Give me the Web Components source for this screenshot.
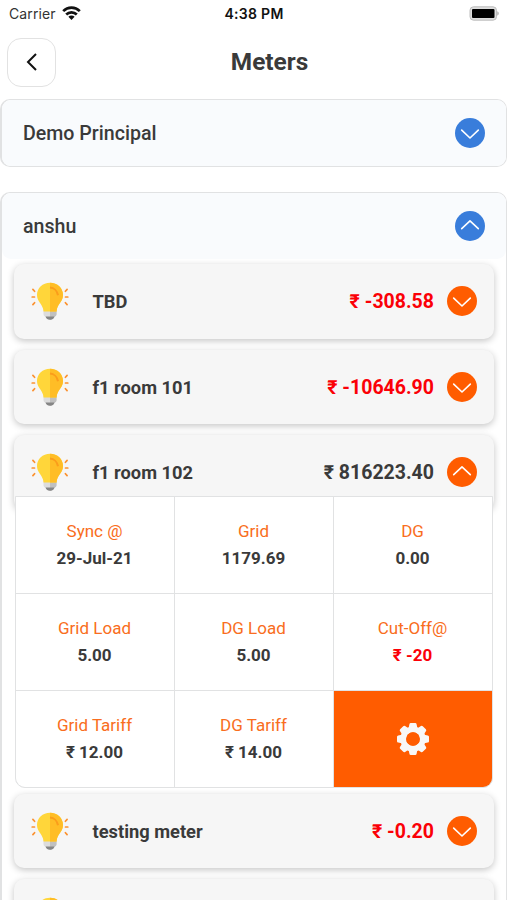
<!DOCTYPE html>
<html lang="en">
<head>
<meta charset="utf-8">
<meta name="viewport" content="width=device-width, initial-scale=1">
<title>Meters</title>
<style>
    :root {
        --accent-color: #ff5c00;
        --primary-color: #397ddb;
        --text-color: #3a3a3a;
        --danger-color: #fb0007;
        --line-color: #e1e2e3;
    }
    body {
        margin: 0;
        background: #fff;
        color: var(--text-color);
        font-family: Roboto, "Noto Sans", sans-serif;
    }
</style>
</head>
<body>
<meters-screen></meters-screen>

<script>
class BaseElement extends HTMLElement {
    constructor() {
        super();
        this.attachShadow({ mode: 'open' });
    }

    connectedCallback() {
        this.render();
    }

    render() {
        const template = document.createElement('template');
        template.innerHTML = this.html();
        this.shadowRoot.innerHTML = '';
        this.shadowRoot.appendChild(template.content.cloneNode(true));
    }
}

class StatusBar extends BaseElement {
    html() {
        return `
            <style>
                :host {
                    display: grid;
                    grid-template-columns: 1fr auto 1fr;
                    align-items: center;
                    height: 28px;
                    padding: 0 8px 0 9px;
                    color: #111;
                    font: 400 14px/28px Inter, sans-serif;
                }
                .carrier { display: flex; align-items: center; gap: 6px; color: #333; }
                .carrier span { letter-spacing: .1px; }
                .carrier svg { margin-top: -2px; }
                .time { font-weight: 600; letter-spacing: .3px; }
                .battery { justify-self: end; margin-top: -2px; }
                svg { display: block; }
            </style>
            <div class="carrier">
                <span>Carrier</span>
                <svg width="19" height="14" viewBox="0 0 19 14" fill="none" stroke="#111" stroke-width="2.7">
                    <path d="M1.2 5.1a11.8 11.8 0 0 1 16.6 0"/>
                    <path d="M4.2 8.5a7.6 7.6 0 0 1 10.6 0"/>
                    <path d="M9.5 14L6.4 10.7a4.4 4.4 0 0 1 6.2 0z" fill="#111" stroke="none"/>
                </svg>
            </div>
            <div class="time">4:38 PM</div>
            <svg class="battery" width="31" height="15" viewBox="0 0 31 15">
                <rect x="2" y=".8" width="26.500" height="13.400" rx="3.500" fill="#dedede" stroke="#bdbdbd"/>
                <rect x="4" y="3" width="22.500" height="9" rx="1" fill="#000"/>
                <path d="M29.300 5.300v4.400a2.400 2.400 0 0 0 0-4.400z" fill="#aaa"/>
            </svg>
        `;
    }
}

class ScreenHeader extends BaseElement {
    html() {
        return `
            <style>
                :host {
                    display: grid;
                    grid-template-columns: 49px 1fr;
                    align-items: center;
                    padding: 10px 7px 12px;
                }
                button {
                    display: grid;
                    place-items: center;
                    box-sizing: border-box;
                    width: 49px;
                    height: 49px;
                    padding: 0 0 2px;
                    background: #fff;
                    border: 1px solid #e2e2e2;
                    border-radius: 14px;
                }
                h1 { margin: -2px 17px 0 0; font-size: 24.4px; font-weight: 700; line-height: 49px; text-align: center; }
            </style>
            <button aria-label="Back">
                <svg width="14" height="20" viewBox="0 0 14 20" fill="none" stroke="#111" stroke-width="2">
                    <path d="M11 2L3 10l8 8"/>
                </svg>
            </button>
            <h1><slot></slot></h1>
        `;
    }
}

class ToggleButton extends BaseElement {
    html() {
        const path = this.hasAttribute('open') ? 'M6.7 17.7l8.3-7.9 8.3 7.9' : 'M6.7 12.1l8.3 7.9 8.3-7.9';
        return `
            <style>
                :host {
                    display: block;
                    flex: none;
                    width: 30px;
                    height: 30px;
                    border-radius: 50%;
                    background: var(--toggle-color, var(--accent-color));
                }
                svg { display: block; }
            </style>
            <svg width="30" height="30" viewBox="0 0 30 30" fill="none" stroke="#fff" stroke-width="1.6" stroke-linecap="round" stroke-linejoin="round">
                <path d="${path}"/>
            </svg>
        `;
    }
}

class BulbIcon extends BaseElement {
    html() {
        return `
            <style>
                :host { display: block; flex: none; width: 38px; height: 38px; }
                svg { display: block; }
            </style>
            <svg width="38" height="38" viewBox="0 0 38 38">
                <path d="M12.500 28.500h13v3.500c0 1.400-.8 2.200-2 2.700-.8 2.100-2.300 3-4.500 3s-3.700-.9-4.500-3c-1.200-.5-2-1.300-2-2.700z" fill="#dcdcdc"/>
                <path d="M19 28.500h6.500v3.500c0 1.400-.8 2.200-2 2.700-.8 2.100-2.300 3-4.500 3z" fill="#c0c0c0"/>
                <path d="M14.500 34.500h9c-.8 2.200-2.300 3.200-4.500 3.200s-3.700-1-4.500-3.200z" fill="#858585"/>
                <path d="M19 .8C11.600.8 6 6.100 6 13c0 6.200 4.800 8.900 6 13.600l.5 2.900h13l.5-2.900C27.200 21.900 32 19.200 32 13 32 6.100 26.400.8 19 .8z" fill="#ffd63a"/>
                <path d="M19 .8v28.700h6.500l.5-2.900C27.200 21.900 32 19.200 32 13 32 6.100 26.400.8 19 .8z" fill="#ffbd26"/>
                <path d="M19 5.600c4.100.2 7.200 3.400 8 7.600" fill="none" stroke="#fb9d1b" stroke-width="2"/>
                <g stroke="#fb9232" stroke-width="1.700" stroke-linecap="round">
                    <path d="M1.900 7.400l1.700 1.900M1.200 15h2.300M1.900 22.600l1.700-1.900M36.100 7.400l-1.700 1.900M36.800 15h-2.300M36.100 22.600l-1.700-1.900"/>
                </g>
            </svg>
        `;
    }
}

class MeterGroup extends BaseElement {
    html() {
        const open = this.hasAttribute('open');
        return `
            <style>
                :host {
                    display: block;
                    box-sizing: border-box;
                    border: 1px solid var(--line-color);
                    border-left-width: 2px;
                    border-radius: 10px;
                    background: #fff;
                }
                header {
                    display: flex;
                    align-items: center;
                    justify-content: space-between;
                    height: 66px;
                    padding: 0 21px;
                    border-radius: 9px;
                    background: #f9fbfd;
                    --toggle-color: var(--primary-color);
                }
                h2 { margin: 0; font-size: 19.6px; font-weight: 500; }
                .list { display: flex; flex-direction: column; gap: 11px; padding: 5px 12px 0; }
            </style>
            <header>
                <h2>${this.getAttribute('name')}</h2>
                <toggle-button ${open ? 'open' : ''}></toggle-button>
            </header>
            ${open ? '<div class="list"><slot></slot></div>' : ''}
        `;
    }
}

class MeterCard extends BaseElement {
    html() {
        const open = this.hasAttribute('open');
        const amount = this.getAttribute('amount');
        return `
            <style>
                :host { display: block; }
                .bar {
                    display: flex;
                    align-items: center;
                    box-sizing: border-box;
                    height: 74.5px;
                    padding: 0 17px;
                    border-radius: 10px;
                    background: #f6f6f6;
                    box-shadow: 0 2px 7px rgba(0, 0, 0, .23);
                }
                .name { flex: 1; margin-left: 23.5px; padding-top: 1px; font-size: 18.3px; font-weight: 700; }
                .amount { margin-right: 13px; padding-top: 1px; font-size: 19.5px; font-weight: 700; }
                .amount.negative { color: var(--danger-color); }
                .details {
                    position: relative;
                    display: grid;
                    grid-template-columns: repeat(3, 1fr);
                    grid-auto-rows: 96px;
                    gap: 1px;
                    margin: -14px 1px -5px;
                    border: 1px solid var(--line-color);
                    border-radius: 0 0 10px 10px;
                    background: var(--line-color);
                    overflow: hidden;
                }
            </style>
            <div class="bar">
                <bulb-icon></bulb-icon>
                <span class="name">${this.getAttribute('name') || ''}</span>
                ${amount ? `<span class="amount ${this.hasAttribute('negative') ? 'negative' : ''}">₹ ${amount}</span>` : ''}
                <toggle-button ${open ? 'open' : ''}></toggle-button>
            </div>
            ${open ? '<div class="details"><slot></slot></div>' : ''}
        `;
    }
}

class MeterStat extends BaseElement {
    html() {
        return `
            <style>
                :host {
                    display: flex;
                    flex-direction: column;
                    align-items: center;
                    justify-content: center;
                    padding-right: 1px;
                    background: #fff;
                    font-size: 17px;
                    line-height: 26.5px;
                    font-weight: 700;
                }
                :host([negative]) { color: var(--danger-color); }
                .label { color: #f96d20; font-weight: 400; }
            </style>
            <span class="label">${this.getAttribute('label')}</span>
            <span><slot></slot></span>
        `;
    }
}

class SettingsTile extends BaseElement {
    html() {
        // one tooth, repeated every 45 degrees
        const teeth = [0, 45, 90, 135, 180, 225, 270, 315]
            .map(a => `<path d="M-4.600 -10L-3.600 -14.800Q-3.400 -16 -2.200 -16H2.200Q3.400 -16 3.600 -14.800L4.600 -10Z" transform="rotate(${a})"/>`)
            .join('');
        return `
            <style>
                :host { display: grid; place-items: center; background: var(--accent-color); }
                svg { display: block; }
            </style>
            <svg width="34" height="34" viewBox="-17 -17 34 34" fill="#f8f8f8">
                ${teeth}
                <circle r="9.700" fill="none" stroke="#f8f8f8" stroke-width="5.800"/>
                <circle r="6.800" fill="#ff5c00"/>
            </svg>
        `;
    }
}

class MetersScreen extends BaseElement {
    html() {
        return `
            <style>
                :host { display: block; height: 900px; overflow: hidden; }
                main { display: flex; flex-direction: column; gap: 25px; }
            </style>
            <status-bar></status-bar>
            <screen-header>Meters</screen-header>
            <main>
                <meter-group name="Demo Principal"></meter-group>
                <meter-group name="anshu" open>
                    <meter-card name="TBD" amount="-308.58" negative></meter-card>
                    <meter-card name="f1 room 101" amount="-10646.90" negative></meter-card>
                    <meter-card name="f1 room 102" amount="816223.40" open>
                        <meter-stat label="Sync @">29-Jul-21</meter-stat>
                        <meter-stat label="Grid">1179.69</meter-stat>
                        <meter-stat label="DG">0.00</meter-stat>
                        <meter-stat label="Grid Load">5.00</meter-stat>
                        <meter-stat label="DG Load">5.00</meter-stat>
                        <meter-stat label="Cut-Off@" negative>₹ -20</meter-stat>
                        <meter-stat label="Grid Tariff">₹ 12.00</meter-stat>
                        <meter-stat label="DG Tariff">₹ 14.00</meter-stat>
                        <settings-tile></settings-tile>
                    </meter-card>
                    <meter-card name="testing meter" amount="-0.20" negative></meter-card>
                    <meter-card></meter-card>
                </meter-group>
            </main>
        `;
    }
}

window.customElements.define('status-bar', StatusBar);
window.customElements.define('screen-header', ScreenHeader);
window.customElements.define('toggle-button', ToggleButton);
window.customElements.define('bulb-icon', BulbIcon);
window.customElements.define('meter-group', MeterGroup);
window.customElements.define('meter-card', MeterCard);
window.customElements.define('meter-stat', MeterStat);
window.customElements.define('settings-tile', SettingsTile);
window.customElements.define('meters-screen', MetersScreen);
</script>
</body>
</html>
